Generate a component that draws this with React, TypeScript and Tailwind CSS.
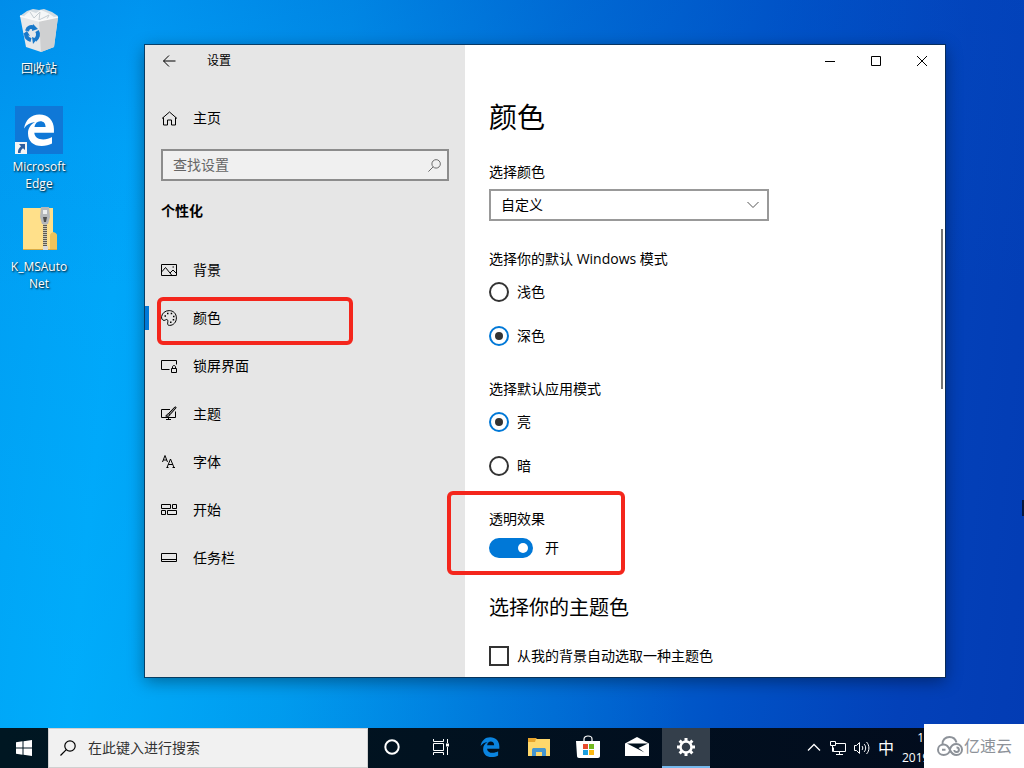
import React, { useState } from 'react';
import { clsx } from 'clsx';

interface NavEntry {
  id: string;
  label: string;
  icon: React.ReactNode;
}

interface IconProps {
  children: React.ReactNode;
}

// Iconos de línea de 16px del panel lateral
const LineIcon: React.FC<IconProps> = ({ children }) => (
  <svg className="h-4 w-4 shrink-0" viewBox="0 0 16 16" fill="none" stroke="currentColor" aria-hidden="true">
    {children}
  </svg>
);

const navEntries: NavEntry[] = [
  {
    id: 'background',
    label: '背景',
    icon: (
      <LineIcon>
        <path d="M.5 2.500h15v11H.5zM.8 9.800 4.500 5.500l6.500 8M9 11l3-3 3.500 3.500" />
        <path d="M11.500 5h1.500" />
      </LineIcon>
    )
  },
  {
    id: 'colors',
    label: '颜色',
    icon: (
      <LineIcon>
        <path d="M.6 6.500C1.200 3 4.300.6 8.200.6c4.200 0 7.200 3.100 7.200 7.300 0 4.300-3 7.500-6.800 7.500-1.800 0-2.200-1.100-1.900-2.500.3-1.700.3-3.100-.8-3.400-1.100-.3-1.500 1-2.900.9C1.200 10.200.3 8.600.6 6.500z" />
        <path d="M3.500 6h1.500M6 3.500h1.500M9.700 3.500h1.500M12 6.500h1.500M11.700 9.800h1.500M9 12.300h1.500" strokeWidth="1.500" />
      </LineIcon>
    )
  },
  {
    id: 'lock',
    label: '锁屏界面',
    icon: (
      <LineIcon>
        <path d="M8.500 11.500h-8v-9h15v4M10.500 10.500h5v4h-5zM11.500 10.500V9c0-2 3-2 3 0v1.500" />
      </LineIcon>
    )
  },
  {
    id: 'themes',
    label: '主题',
    icon: (
      <LineIcon>
        <path d="M9 3.500H.5v8h14v-6M7.500 11.500v2M5 13.500h5" />
        <path
          d="M7.500 7.500 13.800 1c.8-.5 1.600.3 1.100 1.100L9 8.700M7.500 7.500 9 8.700c-.2 1.600-2 2.100-4.300 1.300 1.400-.5 1.300-2.300 2.800-2.500z"
          fill="#888"
        />
      </LineIcon>
    )
  },
  {
    id: 'fonts',
    label: '字体',
    icon: (
      <LineIcon>
        <path d="M1.500 8 4 1.500 6.500 8M2.300 6h3.400" />
        <path d="M6 13.500 9.500 5l3.500 8.500M7.200 10.500h4.600M5.500 13.500h2M11.500 13.500h2.500" />
      </LineIcon>
    )
  },
  {
    id: 'start',
    label: '开始',
    icon: (
      <LineIcon>
        <path d="M.5 2.500h9v4h-9zM11.500 2.500h4v4h-4zM.5 8.500h4v4h-4zM6.500 8.500h9v4h-9z" />
      </LineIcon>
    )
  },
  {
    id: 'taskbar',
    label: '任务栏',
    icon: (
      <LineIcon>
        <path d="M.5 3.500h15v8H.5zM.5 9.500h15" />
      </LineIcon>
    )
  }
];

const RecycleBinIcon = () => (
  <svg className="h-12 w-12" viewBox="0 0 48 48" aria-hidden="true">
    <path d="M5 8 12 3l6-2 6 1 5-1 8 3 6 4-5 6-28 1z" fill="#d3dce2" />
    <path d="m9 8 6-5 6 2 5-3 7 3 6 4-6 5H14z" fill="#f5f7f8" />
    <path d="m15 4 4 6 6-6-1 8 10-5-3 6" fill="none" stroke="#c4ccd2" />
    <path d="m5 8 19 5 19-4-4 30-13 5-15-5z" fill="#e6e8ea" />
    <path d="m24 13 19-4-4 30-13 5z" fill="#cfd0d1" />
    <path d="m5 8 19 5 19-4" fill="none" stroke="#fafafa" strokeWidth="1.500" />
    <g fill="none" stroke="#1979ca" strokeWidth="4">
      <path d="M12 23c1-4 4-5 7-3M22 23c2 3 1 7-2 9M16 32c-4-1-5-3-5-6" />
    </g>
    <path d="m18 16 5 5-6 2zM17 29l1 7 4-5zM8 26l4-3 3 5z" fill="#1979ca" />
  </svg>
);

const EdgeShape: React.FC<{ className: string }> = ({ className }) => (
  <svg className={className} viewBox="0 0 30 30" fill="currentColor" aria-hidden="true">
    <path d="M1 13.500C2.200 5.700 7.700.5 15.300.5 23.500.5 29 6.200 29 14v3.500H10.600c.2 4 3.600 6.300 8.300 6.300 3.100 0 5.900-.9 8.300-2.300v6.200C24.500 29.200 21.300 30 17.500 30 9.600 30 4.700 25.300 4.700 18.200c0-4.700 2.400-8.400 6.700-10.600C6.600 8 3.500 10.100 1 13.500zm9.700-1.300h10.500c-.1-3.600-1.800-5.500-5-5.500-3 0-4.900 2-5.500 5.500z" />
  </svg>
);

const EdgeTile = () => (
  <span className="relative flex h-12 w-12 items-center justify-center bg-[#0f78d7] text-white">
    <EdgeShape className="h-8 w-8" />
    <svg className="absolute bottom-0 left-0 h-3 w-3" viewBox="0 0 12 12" aria-hidden="true">
      <path d="M0 0h12v12H0z" fill="#f4f4f4" />
      <path d="M4 2h6v6L8 6.200C6.200 7.500 5.500 9 5.600 11H3c-.3-2.800.8-5 3-6.800z" fill="#2f5f9f" />
    </svg>
  </span>
);

const ZipIcon = () => (
  <svg className="h-12 w-12" viewBox="0 0 48 48" aria-hidden="true">
    <path d="M8 2h30v24l4 3v15H8z" fill="#f4cf6a" />
    <path d="M8 2h30v42H8z" fill="#ffe08a" />
    <path d="M35 30c0-5 7-5 7 0v14h-7z" fill="#efc35a" />
    <path d="M8 43.500h34" stroke="#d9ab45" />
    <path d="M28 17h4v27h-4z" fill="#c9c5b2" />
    <path d="M30 17v27" stroke="#5d5a50" strokeWidth="4" strokeDasharray="1 1" />
    <path d="M26 1h8l1 10-2 7h-6l-2-7z" fill="#b4b7ba" />
    <path d="M28 4h4v4h-4z" fill="#eceeef" />
    <path d="M28 11h4l-1 5h-2z" fill="#4c4e50" />
    <path d="M28 40h5v4h-5z" fill="#dadada" />
  </svg>
);

const SearchIcon: React.FC<{ className: string }> = ({ className }) => (
  <svg className={className} viewBox="0 0 16 16" fill="none" stroke="currentColor" aria-hidden="true">
    <circle cx="10" cy="6" r="5.200" strokeWidth="1.200" />
    <path d="M6.300 9.700.5 15.500" strokeWidth="1.200" />
  </svg>
);

const desktopItems = [
  { id: 'bin', lines: ['回收站'], icon: <RecycleBinIcon /> },
  { id: 'edge', lines: ['Microsoft', 'Edge'], icon: <EdgeTile /> },
  { id: 'zip', lines: ['K_MSAuto', 'Net'], icon: <ZipIcon /> }
];

const taskbarItems = [
  {
    id: 'cortana',
    label: 'Cortana',
    icon: (
      <svg className="h-4 w-4" viewBox="0 0 16 16" aria-hidden="true">
        <circle cx="8" cy="8" r="6.700" fill="none" stroke="#fff" strokeWidth="2" />
      </svg>
    )
  },
  {
    id: 'taskview',
    label: '任务视图',
    icon: (
      <svg className="h-4 w-4" viewBox="0 0 16 16" fill="none" stroke="#fff" aria-hidden="true">
        <path d="M.5 0v2.500h10V0M.5 4.500h10v7H.5zM.5 16v-2.500h10V16M14.500 0v4M14.500 8v8" />
        <path d="M13 4.500h3v3h-3z" fill="#fff" stroke="none" />
      </svg>
    )
  },
  { id: 'edge', label: 'Microsoft Edge', icon: <EdgeShape className="h-5 w-5 text-[#0a84e0]" /> },
  {
    id: 'explorer',
    label: '文件资源管理器',
    icon: (
      <svg className="h-6 w-6" viewBox="0 0 24 24" aria-hidden="true">
        <path d="M1 3h8l2 2-2 3H1z" fill="#e8a42c" />
        <path d="M9 4h14v17H1V7h7z" fill="#ffd86b" />
        <path d="M5 21v-6c0-1.500.8-2 2-2h10c1.200 0 2 .5 2 2v6h-4v-4H9v4z" fill="#4596cf" />
      </svg>
    )
  },
  {
    id: 'store',
    label: 'Microsoft Store',
    icon: (
      <svg className="h-6 w-6" viewBox="0 0 24 24" aria-hidden="true">
        <path d="M8 7V4c0-4 8-4 8 0v3" fill="none" stroke="#fff" strokeWidth="1.200" />
        <path d="M0 6h24v15c0 1.200-.8 2-2 2H3c-1.200 0-2-.8-2-2z" fill="#fff" />
        <path d="M7 9h5v5H7z" fill="#e84b2c" />
        <path d="M13 9h5v5h-5z" fill="#72b91e" />
        <path d="M7 15h5v5H7z" fill="#1b9fe0" />
        <path d="M13 15h5v5h-5z" fill="#fbb813" />
      </svg>
    )
  },
  {
    id: 'mail',
    label: '邮件',
    icon: (
      <svg className="h-6 w-6" viewBox="0 0 24 24" aria-hidden="true">
        <path d="M0 8.500 12 2l12 6.500V21H0z" fill="#fff" />
        <path d="M2 8.500h21L13.500 13l6 4.500z" fill="#00101d" />
      </svg>
    )
  },
  {
    id: 'settings',
    label: '设置',
    icon: (
      <svg className="h-5 w-5" viewBox="0 0 20 20" fill="none" stroke="#fff" aria-hidden="true">
        <circle cx="10" cy="10" r="5.500" strokeWidth="2.500" />
        <path
          d="M10 1v3M10 16v3M1 10h3M16 10h3M3.600 3.600l2.200 2.200M14.200 14.200l2.200 2.200M3.600 16.400l2.200-2.200M14.200 5.800l2.200-2.200"
          strokeWidth="3"
        />
      </svg>
    )
  }
];

interface RadioGroupProps {
  name: string;
  legend: string;
  options: string[];
  value: string;
  onChange: (value: string) => void;
}

const RadioGroup: React.FC<RadioGroupProps> = ({ name, legend, options, value, onChange }) => (
  <fieldset>
    <legend className="mb-[13px] leading-5">{legend}</legend>
    <div className="flex flex-col gap-6">
      {options.map(option => (
        <label key={option} className="flex h-5 items-center gap-2">
          <input
            type="radio"
            name={name}
            checked={value === option}
            onChange={() => onChange(option)}
            className="grid h-5 w-5 appearance-none place-items-center rounded-full border-2 border-[#333] checked:border-[#0078d7] checked:before:h-2 checked:before:w-2 checked:before:rounded-full checked:before:bg-[#333] checked:before:content-['']"
          />
          {option}
        </label>
      ))}
    </div>
  </fieldset>
);

// Marco rojo que resalta una opción
const Highlight: React.FC<{ className: string }> = ({ className }) => (
  <div className={clsx('pointer-events-none absolute rounded-md border-4 border-[#f4261c]', className)} />
);

const Sidebar: React.FC = () => {
  const [active, setActive] = useState('colors');

  return (
    <aside className="w-80 shrink-0 bg-[#e6e6e6]">
      <div className="flex h-8 items-center gap-[30px] px-4">
        <button aria-label="返回" className="h-4 w-4">
          <svg className="h-4 w-4" viewBox="0 0 16 16" fill="none" stroke="currentColor" aria-hidden="true">
            <path d="M2.500 8h12M8 2.500 2.500 8 8 13.500" />
          </svg>
        </button>
        <span className="text-xs">设置</span>
      </div>

      <a href="#home" className="mt-[21px] flex h-10 items-center gap-4 px-4">
        <LineIcon>
          <path d="M1 8.500 8.500 2 16 8.500M2.500 7.500V15h4v-5h4v5h4V7.500" />
        </LineIcon>
        主页
      </a>

      <div className="mx-4 mt-[11px] flex h-8 items-center border-2 border-[#8c8c8c] bg-[#f0f0f0] pr-[6px] pl-[10px]">
        <input
          type="search"
          aria-label="查找设置"
          placeholder="查找设置"
          className="min-w-0 flex-1 bg-transparent leading-5 outline-none placeholder:text-[#666]"
        />
        <SearchIcon className="h-[13px] w-[13px] text-[#666]" />
      </div>

      <h2 className="mx-4 mt-5 leading-5 font-bold">个性化</h2>

      <nav className="mt-[25px]">
        {navEntries.map(entry => (
          <a
            key={entry.id}
            href={`#${entry.id}`}
            onClick={() => setActive(entry.id)}
            className="relative flex h-12 items-center gap-4 px-4"
          >
            {active === entry.id && <span className="absolute left-0 h-6 w-1 bg-[#0078d7]" />}
            {entry.icon}
            {entry.label}
            {entry.id === 'colors' && <Highlight className="top-[3px] left-3 h-12 w-49" />}
          </a>
        ))}
      </nav>
    </aside>
  );
};

const ColorSettings: React.FC = () => {
  const [windowsMode, setWindowsMode] = useState('深色');
  const [appMode, setAppMode] = useState('亮');
  const [transparency, setTransparency] = useState(true);

  return (
    <div className="flex flex-col px-6 pt-5 pb-[11px]">
      <h1 className="text-[28px] leading-10">颜色</h1>

      <label htmlFor="color-mode" className="mt-[25px] leading-5">
        选择颜色
      </label>
      <div className="relative mt-[7px] w-70">
        <select
          id="color-mode"
          className="h-8 w-full appearance-none border-2 border-[#999] bg-white px-[10px] leading-5"
        >
          <option>自定义</option>
        </select>
        <svg
          className="pointer-events-none absolute top-[10px] right-[10px] h-3 w-3"
          viewBox="0 0 12 12"
          fill="none"
          stroke="#555"
          aria-hidden="true"
        >
          <path d="m.5 3 5.500 5.500L11.500 3" />
        </svg>
      </div>

      <div className="mt-7 flex flex-col gap-[33px]">
        <RadioGroup
          name="windows-mode"
          legend="选择你的默认 Windows 模式"
          options={['浅色', '深色']}
          value={windowsMode}
          onChange={setWindowsMode}
        />
        <RadioGroup
          name="app-mode"
          legend="选择默认应用模式"
          options={['亮', '暗']}
          value={appMode}
          onChange={setAppMode}
        />

        <div className="relative">
          <p className="leading-5">透明效果</p>
          <label className="mt-[9px] flex h-5 items-center gap-3">
            <input
              type="checkbox"
              role="switch"
              aria-label="透明效果"
              checked={transparency}
              onChange={() => setTransparency(!transparency)}
              className="flex h-5 w-11 appearance-none items-center rounded-full bg-[#999] px-[5px] before:h-[10px] before:w-[10px] before:rounded-full before:bg-white before:content-[''] checked:justify-end checked:bg-[#0078d7]"
            />
            {transparency ? '开' : '关'}
          </label>
          <Highlight className="-top-[18px] -left-[42px] h-[84px] w-[178px]" />
        </div>
      </div>

      <h2 className="mt-9 text-xl leading-7">选择你的主题色</h2>
      <label className="mt-6 flex h-5 items-center gap-2">
        <input
          type="checkbox"
          className="h-5 w-5 appearance-none border-2 border-[#333] checked:border-[#0078d7] checked:bg-[#0078d7]"
        />
        从我的背景自动选取一种主题色
      </label>
    </div>
  );
};

const SettingsWindow: React.FC = () => (
  <div className="absolute top-[45px] left-[145px] flex w-200 bg-white shadow-[0_0_0_1px_rgba(10,40,70,0.75),0_4px_16px_rgba(0,0,0,0.4)]">
    <Sidebar />
    <main className="relative min-w-0 flex-1">
      <div className="flex h-8 justify-end">
        <button aria-label="最小化" className="grid w-[46px] place-items-center">
          <svg className="h-3 w-3" viewBox="0 0 12 12" fill="none" stroke="#000" aria-hidden="true">
            <path d="M1 6.500h10" />
          </svg>
        </button>
        <button aria-label="最大化" className="grid w-[46px] place-items-center">
          <svg className="h-3 w-3" viewBox="0 0 12 12" fill="none" stroke="#000" aria-hidden="true">
            <path d="M1.500 1.500h9v9h-9z" />
          </svg>
        </button>
        <button aria-label="关闭" className="grid w-[46px] place-items-center">
          <svg className="h-3 w-3" viewBox="0 0 12 12" fill="none" stroke="#000" aria-hidden="true">
            <path d="m1 1 10 10M11 1 1 11" />
          </svg>
        </button>
      </div>
      <ColorSettings />
      <div className="absolute top-46 right-[2px] h-40 w-[2px] bg-[#767676]" />
    </main>
  </div>
);

const Taskbar: React.FC = () => (
  <footer className="flex h-10 bg-linear-to-r from-[#001722] to-[#020b1d] text-white">
    <button aria-label="开始" className="grid w-12 place-items-center">
      <svg className="h-4 w-4" viewBox="0 0 16 16" fill="#fff" aria-hidden="true">
        <path d="M0 2.200 6.500 1.300v6.200H0zM7.500 1.200 16 0v7.500H7.500zM0 8.500h6.500v6.200L0 13.800zM7.500 8.500H16V16l-8.500-1.200z" />
      </svg>
    </button>
    <div className="flex w-80 items-center gap-3 border border-[#d0d0d0] bg-[#f1f1f1] px-[11px] text-[#333]">
      <SearchIcon className="h-4 w-4 text-black" />
      <input
        type="search"
        aria-label="在此键入进行搜索"
        placeholder="在此键入进行搜索"
        className="min-w-0 flex-1 bg-transparent leading-5 outline-none placeholder:text-[#333]"
      />
    </div>
    <div className="flex gap-px">
      {taskbarItems.map(item => (
        <button
          key={item.id}
          aria-label={item.label}
          className={clsx(
            'grid w-12 place-items-center border-b-2',
            item.id === 'settings' ? 'border-[#76b9ed] bg-[#343f4b]' : 'border-transparent'
          )}
        >
          {item.icon}
        </button>
      ))}
    </div>

    <div className="ml-auto flex items-center gap-2">
      <svg className="h-4 w-4" viewBox="0 0 16 16" fill="none" stroke="#fff" aria-hidden="true">
        <path d="m2 10.500 6-6 6 6" strokeWidth="1.300" />
      </svg>
      <svg className="h-4 w-4" viewBox="0 0 16 16" fill="none" stroke="#fff" aria-hidden="true">
        <path d="M5.500 3.500h10v8h-12v-4M9.500 11.500v3M6 14.500h7M.5 1.500h5v4h-5zM2.500 5.500v6h1" />
      </svg>
      <svg className="h-4 w-4" viewBox="0 0 16 16" fill="none" stroke="#fff" aria-hidden="true">
        <path d="M.5 5.500h2l3-3v11l-3-3h-2zM8 6c1 1 1 3 0 4M10 4c2.200 2 2.200 6 0 8M12.500 2c3.200 3.300 3.200 8.700 0 12" />
      </svg>
      <span className="text-base">中</span>
      <div className="w-[22px] text-xs leading-5">
        <p className="text-right">1</p>
        <p>2019</p>
      </div>
    </div>

    <div className="relative -mt-1 flex w-25 items-center justify-center bg-white text-base text-[#8d9299]">
      <svg className="h-6 w-7" viewBox="0 0 28 24" fill="none" stroke="currentColor" strokeWidth="2" aria-hidden="true">
        <path d="M6.500 10.500C6 6 9.500 3 13.500 3c3.500 0 6 2 7 5.500" />
        <path d="M14 16.500c-1 2.700-3.300 4.500-6.300 4.500C4.500 21 2 18.700 2 15.700s2.500-5.200 5.700-5.200c2.800 0 4.600 1.700 6.300 5.500 1.500 3.300 3.500 5 6.500 5 3.200 0 5.500-2.400 5.500-5.500S23.500 10 20.500 10c-3.200 0-5.500 2-6.500 5" />
        <path d="M6 15.700h3.500M20.500 13.500a2.300 2.300 0 1 1-2.200 2.500" />
      </svg>
      亿速云
    </div>
  </footer>
);

export default function App() {
  return (
    <div className="flex min-h-screen flex-col overflow-hidden bg-[linear-gradient(96deg,#009cf2_0%,#00a5f9_13%,#0092ea_32%,#006fd6_52%,#0052c6_72%,#0341b9_88%,#033cb4_100%)] font-['Open_Sans','Noto_Sans_CJK_SC',sans-serif] text-sm text-black">
      <div className="relative flex-1">
        <div className="absolute inset-0 bg-[linear-gradient(180deg,rgba(0,80,200,0.2)_0%,rgba(0,100,210,0.06)_20%,transparent_40%),radial-gradient(circle_at_10%_100%,rgba(0,190,255,0.3)_0%,transparent_50%)]" />
        <ul className="relative flex w-[78px] flex-col gap-[14px] pt-2 text-center text-xs leading-[17px] text-white text-shadow-[1px_1px_2px_#000]">
          {desktopItems.map(item => (
            <li key={item.id} className="flex min-h-[84px] flex-col items-center gap-1">
              {item.icon}
              <span>
                {item.lines.map(line => (
                  <span key={line} className="block">
                    {line}
                  </span>
                ))}
              </span>
            </li>
          ))}
        </ul>
        <SettingsWindow />
        <div className="absolute top-[500px] right-0 h-4 w-[2px] bg-[#06183e]" />
      </div>
      <Taskbar />
    </div>
  );
}
